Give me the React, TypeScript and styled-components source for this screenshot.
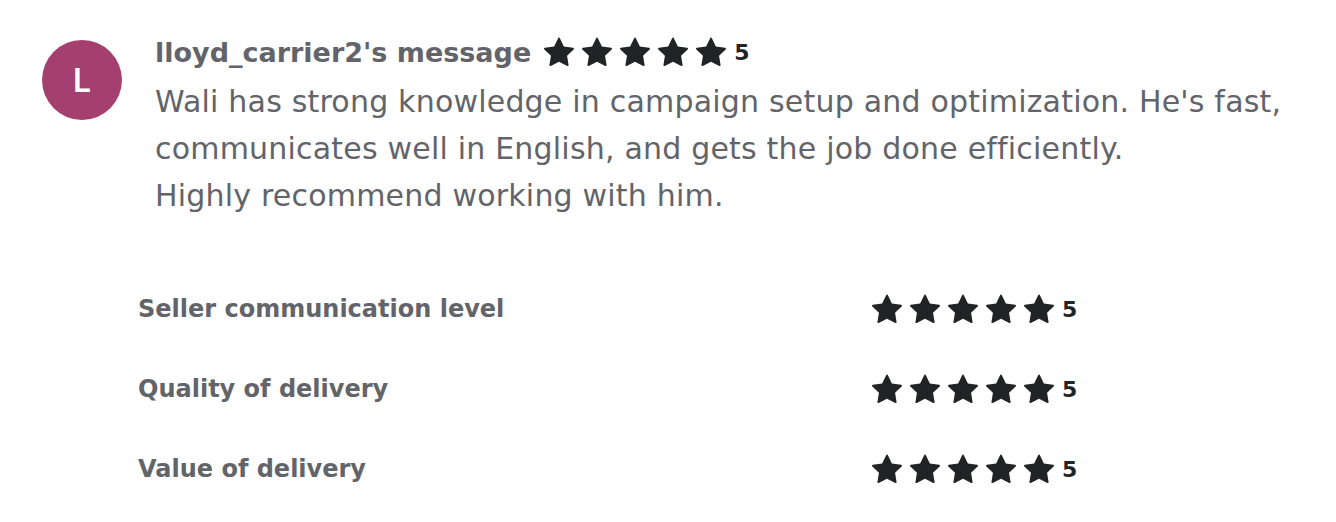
import React from "react";
import styled, { createGlobalStyle } from "styled-components";

const Global = createGlobalStyle`
  html, body { margin: 0; padding: 0; background: #fff; }
  body { font-family: "DejaVu Sans", "Liberation Sans", sans-serif; -webkit-font-smoothing: antialiased; }
`;

const Page = styled.div`
  padding: 40px 42px;
  display: flex;
  flex-direction: column;
`;

const Review = styled.div`
  display: flex;
  gap: 33px;
  align-items: flex-start;
`;

const Avatar = styled.div`
  width: 80px;
  height: 80px;
  border-radius: 50%;
  background: #a43f6f;
  color: #fff;
  display: flex;
  align-items: center;
  justify-content: center;
  font-family: "Inter", "Liberation Sans", sans-serif;
  font-size: 32px;
  font-weight: 600;
  flex-shrink: 0;
`;

const Body = styled.div`
  display: flex;
  flex-direction: column;
`;

const Header = styled.div`
  display: flex;
  align-items: center;
  gap: 13px;
  height: 26px;
  margin-top: -1px;
`;

const Name = styled.span`
  font-size: 27px;
  font-weight: 700;
  color: #62646a;
`;

const Stars = styled.div`
  display: flex;
  align-items: center;
  gap: 8px;
`;

const Score = styled.span`
  font-size: 22px;
  font-weight: 700;
  color: #222325;
`;

const Message = styled.p`
  margin: 13px 0 0;
  font-size: 30px;
  line-height: 47px;
  font-weight: 400;
  letter-spacing: 0.2px;
  color: #62646a;
  white-space: pre-line;
`;

const Ratings = styled.div`
  margin-top: 75px;
  margin-left: 96px;
  display: flex;
  flex-direction: column;
  gap: 50px;
  width: 940px;
`;

const RatingRow = styled.div`
  display: grid;
  grid-template-columns: 734px auto;
  align-items: center;
  height: 30px;
`;

const Label = styled.span`
  font-size: 24px;
  font-weight: 700;
  color: #62646a;
`;

const StarIcon = () => (
  <svg width="30" height="30" viewBox="0 0 16 16" fill="#222325">
    <path d="M16 6.2c0-.3-.2-.5-.5-.5l-4.9-.7L8.4.5C8.3.3 8.2.2 8 .2s-.3.1-.4.3L5.4 5 .5 5.7c-.3 0-.5.2-.5.5 0 .1.1.3.2.4l3.5 3.4-.8 4.9c0 .2.1.4.2.5.1.1.2.1.3.1h.2L8 13.2l4.4 2.3h.2c.1 0 .2 0 .3-.1.2-.1.2-.3.2-.5l-.8-4.9 3.5-3.4c.1-.1.2-.3.2-.4z" />
  </svg>
);

const StarRating = ({ value }: { value: number }) => (
  <Stars>
    {Array.from({ length: 5 }).map((_, i) => (
      <StarIcon key={i} />
    ))}
    <Score>{value}</Score>
  </Stars>
);

const rows = [
  "Seller communication level",
  "Quality of delivery",
  "Value of delivery",
];

export default function App() {
  return (
    <>
      <Global />
      <Page>
        <Review>
          <Avatar>L</Avatar>
          <Body>
            <Header>
              <Name>lloyd_carrier2's message</Name>
              <StarRating value={5} />
            </Header>
            <Message>
              {"Wali has strong knowledge in campaign setup and optimization. He's fast,\ncommunicates well in English, and gets the job done efficiently.\nHighly recommend working with him."}
            </Message>
          </Body>
        </Review>
        <Ratings>
          {rows.map((r) => (
            <RatingRow key={r}>
              <Label>{r}</Label>
              <StarRating value={5} />
            </RatingRow>
          ))}
        </Ratings>
      </Page>
    </>
  );
}
